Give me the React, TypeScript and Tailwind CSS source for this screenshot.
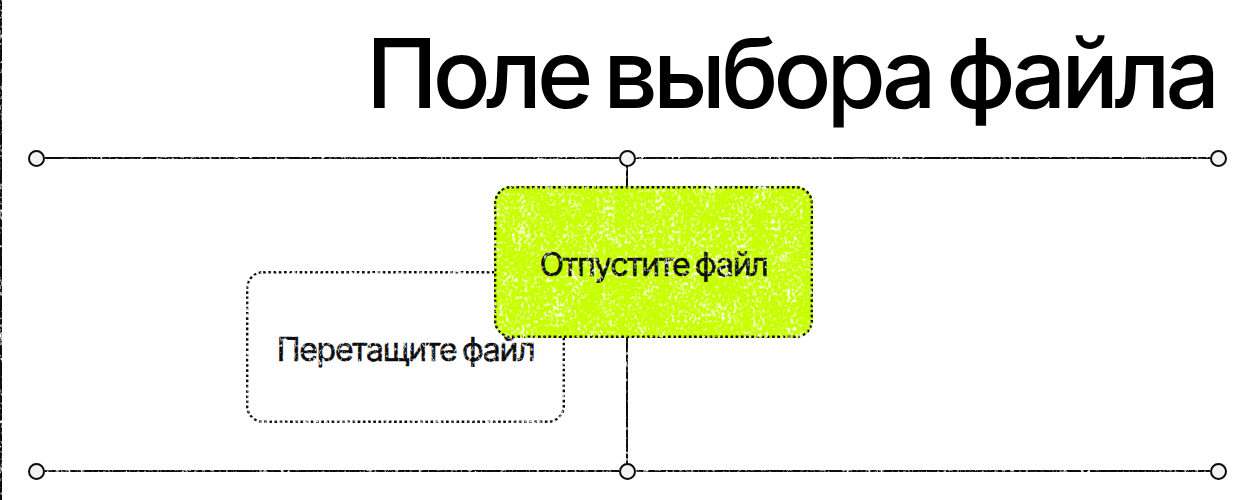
const Node = () => <span className="relative z-40 size-[17px] shrink-0 rounded-full border-2 border-[#0b0c0d] bg-[#f3f3f3]" />;

function Rail() {
  return (
    <div className="flex h-[17px] items-center justify-between">
      <Node />
      <span className="-mt-[2px] h-0.5 flex-1 bg-[#0b0c0d]" />
      <Node />
      <span className="-mt-[2px] h-0.5 flex-1 bg-[#0b0c0d]" />
      <Node />
    </div>
  );
}

function DropZone({ label, className }: { label: string; className: string }) {
  return (
    <div className={`absolute flex h-[152px] w-[319px] items-center justify-center rounded-[18px] pt-[5px] text-[32px] leading-none text-[#0b0c0d] ${className}`}>
      <svg className="absolute inset-0 size-full" viewBox="0 0 319 152" fill="none" aria-hidden="true">
        <rect x="1.2" y="1.2" width="316.6" height="149.6" rx="16" stroke="#0b0c0d" strokeWidth="2.4" strokeDasharray="2.7 2.5" />
      </svg>
      <span className="whitespace-nowrap tracking-[-1.25px] [word-spacing:-2.5px] [-webkit-text-stroke:0.6px_#0b0c0d]">{label}</span>
    </div>
  );
}

function Grain() {
  return (
    <svg className="pointer-events-none absolute inset-0 z-30 size-full" aria-hidden="true">
      <filter id="grain" x="0" y="0" width="100%" height="100%" colorInterpolationFilters="sRGB">
        <feTurbulence type="fractalNoise" baseFrequency="0.32 0.29" numOctaves="3" seed="7" result="fine" />
        <feTurbulence type="fractalNoise" baseFrequency="0.06 0.04" numOctaves="3" seed="3" result="broad" />
        <feComposite in="fine" in2="broad" operator="arithmetic" k1="0" k2="0.7" k3="0.3" k4="0" />
        <feColorMatrix values="0 0 0 0 1  0 0 0 0 1  0 0 0 0 1  0 0 0 4.4 -2.27" />
      </filter>
      <rect width="100%" height="100%" filter="url(#grain)" />
    </svg>
  );
}

export default function App() {
  return (
    <main className="relative flex h-[500px] w-[1250px] overflow-hidden bg-white font-['Inter','Liberation_Sans',sans-serif]">
      <div className="w-0.5 shrink-0 bg-[#0b0c0d]" />
      <div className="min-w-0 flex-1">
        <h1 className="relative z-40 flex h-[150px] justify-end pr-[35px] pt-[15px] text-[96px] font-medium leading-[116px] tracking-[-4.9px] whitespace-nowrap text-black [word-spacing:-6px]">Поле выбора файла</h1>
        <section className="relative mr-[23px] ml-[26px] flex h-[330px] flex-col justify-between">
          <Rail />
          <span className="absolute top-4 left-[598px] h-[298px] w-0.5 bg-[#0b0c0d]" />
          <DropZone label="Перетащите файл" className="top-[121px] left-[218px] bg-white" />
          <DropZone label="Отпустите файл" className="top-[36px] left-[466px] z-20 bg-[#c8ff00]" />
          <Rail />
        </section>
      </div>
      <Grain />
    </main>
  );
}
